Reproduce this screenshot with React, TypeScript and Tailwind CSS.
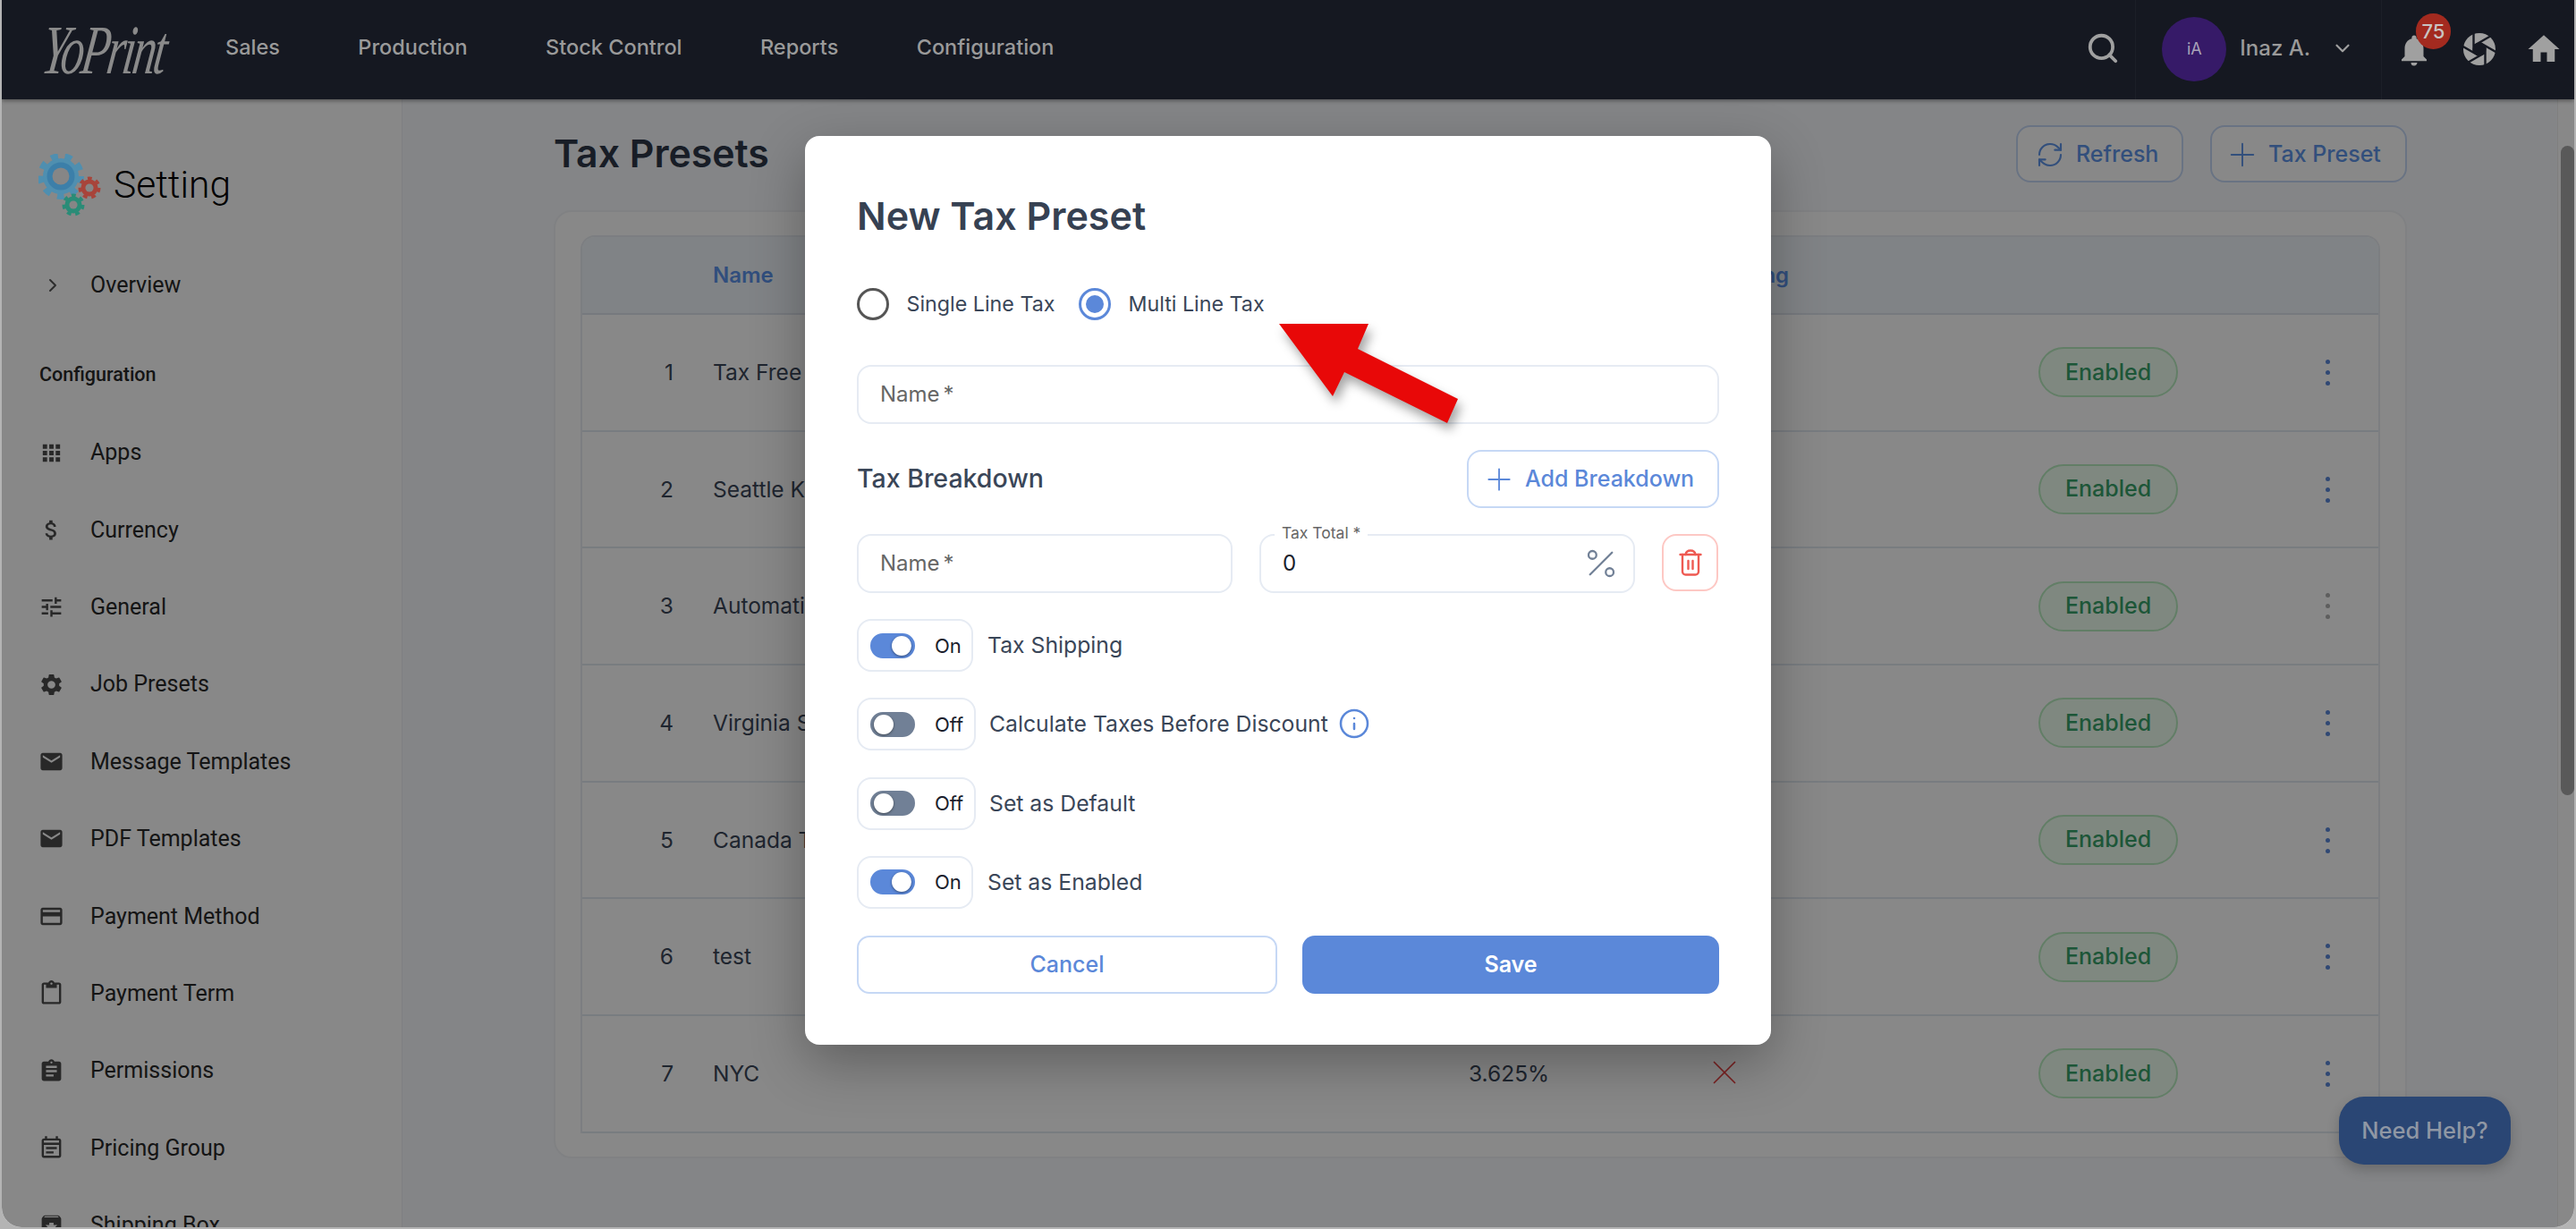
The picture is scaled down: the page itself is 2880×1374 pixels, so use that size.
import React from "react";
import { Search, ChevronDown, ChevronRight, RefreshCw, Plus, Percent, Info, X } from "lucide-react";
import {
  MdApps, MdAttachMoney, MdTune, MdSettings, MdEmail, MdCreditCard, MdOutlineContentPaste,
  MdAssignment, MdOutlineEventNote, MdArchive, MdNotifications, MdHome,
} from "react-icons/md";

const navItems = ["Sales", "Production", "Stock Control", "Reports", "Configuration"];

const sideItems: [React.ComponentType<{ size?: number }>, string][] = [
  [MdApps, "Apps"],
  [MdAttachMoney, "Currency"],
  [MdTune, "General"],
  [MdSettings, "Job Presets"],
  [MdEmail, "Message Templates"],
  [MdEmail, "PDF Templates"],
  [MdCreditCard, "Payment Method"],
  [MdOutlineContentPaste, "Payment Term"],
  [MdAssignment, "Permissions"],
  [MdOutlineEventNote, "Pricing Group"],
  [MdArchive, "Shipping Box"],
];

const rows = ["Tax Free", "Seattle King County", "Automatic", "Virginia State", "Canada Tax", "test", "NYC"];

function Gear({ cx, cy, r, teeth, color, inner, hole }: { cx: number; cy: number; r: number; teeth: number; color: string; inner?: string; hole: string }) {
  const rt = r * 0.9;
  const dash = (2 * Math.PI * rt) / teeth / 2;
  return (
    <g>
      <circle cx={cx} cy={cy} r={rt} fill="none" stroke={color} strokeWidth={r * 0.28} strokeDasharray={`${dash} ${dash}`} />
      <circle cx={cx} cy={cy} r={r * 0.8} fill={color} />
      {inner && <circle cx={cx} cy={cy} r={r * 0.62} fill={inner} />}
      <circle cx={cx} cy={cy} r={r * 0.38} fill={hole} />
    </g>
  );
}

function Aperture() {
  const bg = "#151821";
  const R = 18;
  const r = 7.5;
  const lines = [0, 1, 2, 3, 4, 5].map((k) => {
    const a = (Math.PI / 3) * k - Math.PI / 6;
    const x = 19 + r * Math.cos(a);
    const y = 19 + r * Math.sin(a);
    const d = a + (2 * Math.PI) / 3;
    return [x, y, x + R * 1.2 * Math.cos(d), y + R * 1.2 * Math.sin(d)];
  });
  return (
    <svg width="38" height="38" viewBox="0 0 38 38">
      <circle cx="19" cy="19" r={R} fill="#a0a0a0" />
      {lines.map((l, i) => (
        <line key={i} x1={l[0]} y1={l[1]} x2={l[2]} y2={l[3]} stroke={bg} strokeWidth="2.4" />
      ))}
      <circle cx="19" cy="19" r={r} fill={bg} />
    </svg>
  );
}

function Toggle({ on, label, info }: { on: boolean; label: string; info?: boolean }) {
  return (
    <div className="flex items-center h-[59px]">
      <div className={`flex items-center h-full rounded-[16px] border-2 border-[#e6ebf3] pl-[13px] ${on ? "w-[130px]" : "w-[133px]"}`}>
        <div className={`relative w-[50px] h-[28px] rounded-[14px] flex items-center px-[4px] ${on ? "bg-[#5b88d9] justify-end" : "bg-[#718096] justify-start"}`}>
          <div className="w-[22px] h-[22px] rounded-full bg-white shadow-[0_1px_3px_rgba(0,0,0,0.45)]" />
        </div>
        <span className="ml-[22px] text-[22px] leading-none text-[#1a202c]">{on ? "On" : "Off"}</span>
      </div>
      <span className={`${on ? "ml-[16px]" : "ml-[15px]"} text-[24.75px] leading-none text-[#3a4658]`}>{label}</span>
      {info && <Info size={36} strokeWidth={1.7} className="ml-[11px] -mt-[2px] text-[#5b88d9]" />}
    </div>
  );
}

function NameField({ className }: { className: string }) {
  return (
    <div className={`flex items-center h-[66px] rounded-[16px] border-2 border-[#e6ebf3] pl-[24px] text-[24px] text-[#666] ${className}`}>
      Name<span className="ml-[4px]">*</span>
    </div>
  );
}

function Trash() {
  return (
    <svg width="26" height="30" viewBox="0 0 26 30" fill="none" stroke="#ee5a52" strokeWidth="2.4" strokeLinecap="round" strokeLinejoin="round">
      <path d="M1.5 6h23" />
      <path d="M7.5 6C8 2.8 10 1.5 13 1.5S18 2.8 18.5 6" />
      <path d="M4 6v19a3.5 3.5 0 0 0 3.5 3.5h11A3.5 3.5 0 0 0 22 25V6" />
      <path d="M10.5 13v9M15.5 13v9" />
    </svg>
  );
}

export default function App() {
  return (
    <div className="relative w-[2880px] h-[1374px] overflow-hidden bg-[#b4b4b4] px-[2px] pb-[2px] font-[Inter,sans-serif]">
      <div className="relative w-full h-full overflow-hidden rounded-b-[22px] flex flex-col bg-[#f8fafe]">
        {/* header */}
        <header className="relative z-50 h-[111px] shrink-0 flex items-center bg-[#151821] shadow-[0_2px_4px_rgba(0,0,0,0.35)] pr-[13px]">
          <div className="w-[250px] shrink-0 pl-[46px] flex items-center">
            <span className="inline-block font-['Liberation_Serif',serif] italic text-[52px] leading-none tracking-[-3px] text-[#8a8a8a] scale-y-[1.5] -skew-x-12 origin-left">YoPrint</span>
          </div>
          <nav className="flex items-center gap-[87.4px] -mt-[5px] text-[23.5px] font-medium text-[#9a9a9a]">
            {navItems.map((n) => <span key={n}>{n}</span>)}
          </nav>
          <div className="ml-auto h-full flex items-center">
            <Search size={38} strokeWidth={2.4} className="-mt-[3px] text-[#a0a0a0]" />
            <div className="ml-[17px] w-px h-full bg-[#1c1f28]" />
            <div className="ml-[29px] -mt-[2px] w-[72px] h-[72px] rounded-full bg-[#361a68] flex items-center justify-center text-[18px] text-[#a9a3b8]">iA</div>
            <span className="ml-[15px] -mt-[4px] text-[24px] font-medium text-[#9a9a9a]">Inaz A.</span>
            <ChevronDown size={26} strokeWidth={2} className="ml-[23px] -mt-[3px] text-[#a0a0a0]" />
            <div className="ml-[30px] w-px h-full bg-[#1c1f28]" />
            <div className="relative ml-[15px] w-[42px] h-[42px] mt-[1px] text-[#a0a0a0]">
              <MdNotifications size={42} />
              <span className="absolute left-[23px] top-[-20px] w-[39px] h-[40px] rounded-full bg-[#a32a1f] flex items-center justify-center text-[22px] font-medium text-[#c9c4c2]">75</span>
            </div>
            <div className="ml-[33px] -mt-[2px]"><Aperture /></div>
            <div className="ml-[32px] -mt-[2px] text-[#a0a0a0]"><MdHome size={42} /></div>
          </div>
        </header>

        <div className="flex flex-1 min-h-0">
          {/* sidebar */}
          <aside className="w-[448px] shrink-0 bg-white border-r border-[#eceff4] overflow-hidden font-[Roboto,sans-serif] text-[#282828]">
            <div className="flex items-center h-[70px] mt-[61px] pl-[41px]">
              <svg width="70" height="70" viewBox="0 0 70 70" className="relative z-50 shrink-0">
                <Gear cx={25} cy={25} r={25} teeth={9} color="#4f8fb0" inner="#3c7fa9" hole="#868686" />
                <Gear cx={57} cy={38} r={12} teeth={7} color="#a8443a" hole="#868686" />
                <Gear cx={39} cy={57} r={12} teeth={7} color="#2a8c77" hole="#868686" />
              </svg>
              <span className="ml-[14px] text-[42.5px] font-light leading-none text-black">Setting</span>
            </div>
            <div className="mt-[55px] flex items-center h-[44px] pl-[42px]">
              <span className="w-[30px] flex justify-center"><ChevronRight size={24} strokeWidth={2} className="text-[#555]" /></span>
              <span className="ml-[27px] text-[25px]">Overview</span>
            </div>
            <div className="mt-[56px] h-[44px] flex items-center pl-[42px] text-[21.5px] font-medium">Configuration</div>
            <ul className="mt-[43px] flex flex-col gap-[42.4px]">
              {sideItems.map(([Icon, label]) => (
                <li key={label} className="flex items-center h-[44px] pl-[40px]">
                  <span className="w-[30px] flex justify-center text-[#4b4b4b]"><Icon size={29} /></span>
                  <span className="ml-[29px] text-[25px]">{label}</span>
                </li>
              ))}
            </ul>
          </aside>

          {/* main */}
          <main className="flex-1 min-w-0 pl-[169px] pr-[168px] pt-[29px] flex flex-col">
            <div className="flex items-center h-[64px]">
              <h1 className="text-[42.8px] font-semibold leading-none text-[#2d3748]">Tax Presets</h1>
              <div className="ml-auto flex gap-[30px] text-[25px] font-medium text-[#5f95e8]">
                <button className="flex items-center w-[187px] h-[64px] pl-[20px] pt-[2px] rounded-[16px] border-2 border-[#c6d8f5] bg-white">
                  <RefreshCw size={32} strokeWidth={1.6} />
                  <span className="ml-[13px]">Refresh</span>
                </button>
                <button className="flex items-center w-[220px] h-[64px] pl-[13px] pt-[2px] rounded-[16px] border-2 border-[#c6d8f5] bg-white">
                  <Plus size={42} strokeWidth={1.1} />
                  <span className="ml-[8px]">Tax Preset</span>
                </button>
              </div>
            </div>
            <section className="mt-[31px] h-[1060px] rounded-[20px] bg-white border-2 border-[#f0f2f5] px-[28px] pt-[26px]">
              <div className="rounded-t-[16px] border-x-2 border-t-2 border-[#e8ecf2] overflow-hidden">
                <div className="grid grid-cols-[146px_845px_274px_363px_1fr] items-center h-[87px] bg-[#f0f6fb] border-b-2 border-[#dde3ec] text-[24px] font-semibold text-[#5c92ea]">
                  <span className="col-start-2">Name</span>
                  <span className="col-start-4 -ml-[66px]">Tax Shipping</span>
                </div>
                {rows.map((name, i) => (
                  <div key={name} className="grid grid-cols-[146px_845px_274px_363px_1fr] items-center h-[130.7px] border-b-2 border-[#e2e8f0] text-[24.5px] text-[#3a4658]">
                    <span className="text-right pr-[44px]">{i + 1}</span>
                    <span className="block w-[103px] overflow-hidden whitespace-nowrap">{name}</span>
                    <span>{i === 6 ? "3.625%" : ""}</span>
                    <span>{i === 6 && <X size={46} strokeWidth={0.9} className="-ml-[11.5px] -mt-[2px] text-[#e53e3e]" />}</span>
                    <div className="flex items-center">
                      <span className="w-[156px] h-[56px] flex items-center justify-center rounded-[28px] bg-[#eefff0] border-2 border-[#b8ecc0] text-[25px] font-medium text-[#38a169]">Enabled</span>
                      <div className="ml-[165px] flex flex-col gap-[7px]">
                        {[0, 1, 2].map((d) => (
                          <span key={d} className={`w-[5px] h-[5px] rounded-full ${i === 2 ? "bg-[#b0b0b0]" : "bg-[#5b88d9]"}`} />
                        ))}
                      </div>
                    </div>
                  </div>
                ))}
              </div>
            </section>
          </main>

          {/* scrollbar */}
          <div className="relative w-[19px] shrink-0 bg-white border-l border-[#eee]">
            <div className="absolute left-[3px] top-[52px] w-[15px] h-[726px] rounded-full bg-[#a8a8a8]" />
          </div>
        </div>

        <button className="absolute z-50 left-[2613px] top-[1226px] w-[192px] h-[76px] rounded-[28px] bg-[#2a4674] shadow-[0_6px_14px_rgba(0,0,0,0.2)] text-[25.5px] font-medium text-[#8f97a4]">Need Help?</button>

        <div className="absolute inset-0 z-40 bg-black/[.467]" />
      </div>

      {/* modal */}
      <div className="absolute z-50 left-[900px] top-[152px] w-[1080px] h-[1016px] rounded-[16px] bg-white shadow-[0_20px_60px_rgba(0,0,0,0.3)] px-[58px] pt-[64px] flex flex-col">
        <h2 className="h-[50px] flex items-center text-[43px] font-semibold leading-none text-[#364152]">New Tax Preset</h2>
        <div className="mt-[56px] h-[36px] flex items-center text-[23.25px] text-[#3a4658]">
          <span className="w-[36px] h-[36px] rounded-full border-[3.5px] border-[#555]" />
          <span className="ml-[19.5px]">Single Line Tax</span>
          <span className="ml-[27px] w-[36px] h-[36px] rounded-full border-[3.5px] border-[#5b88d9] flex items-center justify-center">
            <span className="w-[20px] h-[20px] rounded-full bg-[#5b88d9]" />
          </span>
          <span className="ml-[19px]">Multi Line Tax</span>
        </div>
        <NameField className="mt-[50px] w-full" />
        <div className="mt-[29px] h-[65px] flex items-center justify-between">
          <span className="text-[28.5px] font-medium text-[#3a4658]">Tax Breakdown</span>
          <button className="w-[282px] h-[65px] flex items-center pl-[14px] rounded-[16px] border-2 border-[#c6d8f5] text-[25px] font-medium text-[#5b88d9]">
            <Plus size={40} strokeWidth={1.1} />
            <span className="ml-[9px]">Add Breakdown</span>
          </button>
        </div>
        <div className="mt-[29px] flex items-start">
          <NameField className="w-[420px]" />
          <div className="relative ml-[30px] w-[420px] h-[66px] flex items-center justify-between rounded-[16px] border-2 border-[#e6ebf3] pl-[24px] pr-[15px] text-[24px] text-[#1a202c]">
            <span className="absolute left-[15px] top-[-15px] px-[8px] bg-white text-[17.5px] leading-[24px] text-[#666]">Tax Total *</span>
            <span>0</span>
            <Percent size={42} strokeWidth={1.3} className="text-[#718096]" />
          </div>
          <button className="ml-[30px] w-[63px] h-[64px] flex items-center justify-center rounded-[16px] border-2 border-[#fdc8c4]"><Trash /></button>
        </div>
        <div className="mt-[29px] flex flex-col gap-[29.3px]">
          <Toggle on label="Tax Shipping" />
          <Toggle on={false} label="Calculate Taxes Before Discount" info />
          <Toggle on={false} label="Set as Default" />
          <Toggle on label="Set as Enabled" />
        </div>
        <div className="mt-[30px] flex gap-[28px] text-[25px] font-medium">
          <button className="flex-1 h-[65px] rounded-[14px] border-2 border-[#c6d8f5] text-[#5b88d9]">Cancel</button>
          <button className="flex-1 h-[65px] rounded-[14px] bg-[#5b88d9] text-white font-semibold">Save</button>
        </div>
      </div>

      {/* annotation arrow */}
      <svg className="absolute z-[60] left-0 top-0 pointer-events-none" width="2880" height="1374" style={{ filter: "drop-shadow(4px 8px 6px rgba(0,0,0,0.35))" }}>
        <polygon points="1430,362 1530,362 1518,390 1630,446 1618,473 1503,416 1490,443" fill="#e80808" />
      </svg>
    </div>
  );
}
